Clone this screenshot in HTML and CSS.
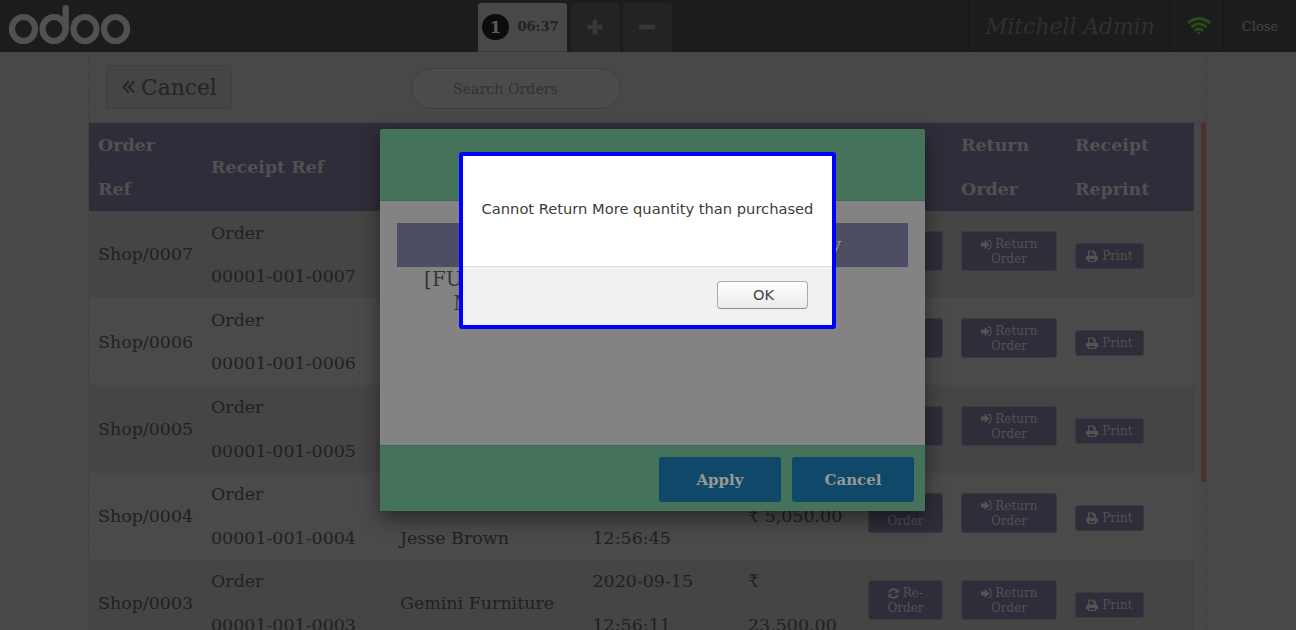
FILE: index.html
```html
<!DOCTYPE html>
<html lang="en">
<head>
<meta charset="utf-8">
<title>Point of Sale</title>
<link rel="stylesheet" href="styles.css">
</head>
<body>
<svg class="defs" width="0" height="0">
  <symbol id="i-return" viewBox="0 0 12 12"><path d="M0 3.900h4V.8L9.200 6 4 11.200V8.100H0z" fill="currentColor"/><path d="M7.500 1.500h1.600q1.700 0 1.700 1.700v5.600q0 1.700-1.700 1.700H7.500" fill="none" stroke="currentColor" stroke-width="1.200"/></symbol>
  <symbol id="i-print" viewBox="0 0 12 12"><path d="M2.600 6V1.200h5.100l1.700 1.700V6M7.300 1.200v2.200h2.100" fill="none" stroke="currentColor" stroke-width="1.200"/><path d="M1.700 5.500h8.600q1.700 0 1.700 1.700v3H9.800V8.300H2.200v1.900H0v-3q0-1.700 1.700-1.700z" fill="currentColor"/><path d="M2.500 8.500h7v2.800h-7z" fill="none" stroke="currentColor" stroke-width="1.200"/></symbol>
  <symbol id="i-refresh" viewBox="0 0 12 12"><path d="M1.400 5A4.600 4.600 0 0 1 9.500 3M10.600 7A4.600 4.600 0 0 1 2.500 9" fill="none" stroke="currentColor" stroke-width="2.100"/><path d="M11.700.5v4.700H7zM.3 11.500V6.800H5z" fill="currentColor"/></symbol>
</svg>
<div class="pos">
  <header class="topbar">
    <svg class="logo" width="124" height="42" viewBox="0 0 124 42" fill="none" stroke="#515151" stroke-width="6.200">
      <ellipse cx="15.500" cy="26" rx="11.500" ry="12"/><ellipse cx="46" cy="26" rx="11.500" ry="12"/><ellipse cx="77" cy="26" rx="11.500" ry="12"/><ellipse cx="107.500" cy="26" rx="11.500" ry="12"/>
      <path d="M57.700 26V5" stroke-linecap="round"/>
    </svg>
    <div class="tabs">
      <div class="tab active"><span class="num">1</span><span class="time">06:37</span></div>
      <div class="tab sq"><svg width="16" height="16" viewBox="0 0 16 16"><path d="M8 .5v15M.5 8h15" stroke="#383838" stroke-width="4.600"/></svg></div>
      <div class="tab sq"><svg width="16" height="16" viewBox="0 0 16 16"><path d="M0 8h16" stroke="#383838" stroke-width="4.600"/></svg></div>
    </div>
    <div class="user">Mitchell Admin</div>
    <div class="wifi"><svg width="26" height="18" viewBox="0 0 26 18" fill="none" stroke="#264c17" stroke-width="3"><path d="M2 6.200q11-9.200 22 0M5.400 10q7.600-6.400 15.200 0M8.700 13.600q4.300-3.500 8.600 0"/><path d="M10.900 15.500q2.100-1.500 4.200 0L13 17.700z" fill="#264c17" stroke="none"/></svg></div>
    <div class="close">Close</div>
  </header>
  <main class="screen">
    <div class="tools">
      <div class="back"><svg width="13" height="14" viewBox="0 0 13 14" fill="none" stroke="#242424" stroke-width="1.900"><path d="M6.700 1.500L1.500 7l5.200 5.500M12 1.500L6.800 7l5.200 5.500"/></svg><span>Cancel</span></div>
      <div class="search">Search Orders</div>
    </div>
    <div class="list">
      <div class="orders">
        <div class="row head"><div>Order<br>Ref</div><div>Receipt Ref</div><div></div><div></div><div></div><div>Re-<br>Order</div><div>Return<br>Order</div><div>Receipt<br>Reprint</div></div>
        <div class="row odd"><div>Shop/0007</div><div>Order<br>00001-001-0007</div><div></div><div></div><div></div><div><span class="btn re"><svg><use href="#i-refresh"/></svg> Re-<br>Order</span></div><div><span class="btn ret"><svg><use href="#i-return"/></svg> Return<br>Order</span></div><div><span class="btn print"><svg><use href="#i-print"/></svg> Print</span></div></div>
        <div class="row"><div>Shop/0006</div><div>Order<br>00001-001-0006</div><div></div><div></div><div></div><div><span class="btn re"><svg><use href="#i-refresh"/></svg> Re-<br>Order</span></div><div><span class="btn ret"><svg><use href="#i-return"/></svg> Return<br>Order</span></div><div><span class="btn print"><svg><use href="#i-print"/></svg> Print</span></div></div>
        <div class="row odd"><div>Shop/0005</div><div>Order<br>00001-001-0005</div><div></div><div></div><div></div><div><span class="btn re"><svg><use href="#i-refresh"/></svg> Re-<br>Order</span></div><div><span class="btn ret"><svg><use href="#i-return"/></svg> Return<br>Order</span></div><div><span class="btn print"><svg><use href="#i-print"/></svg> Print</span></div></div>
        <div class="row"><div>Shop/0004</div><div>Order<br>00001-001-0004</div><div><br>Jesse Brown</div><div>2020-09-15<br>12:56:45</div><div>₹ 5,050.00</div><div><span class="btn re"><svg><use href="#i-refresh"/></svg> Re-<br>Order</span></div><div><span class="btn ret"><svg><use href="#i-return"/></svg> Return<br>Order</span></div><div><span class="btn print"><svg><use href="#i-print"/></svg> Print</span></div></div>
        <div class="row odd"><div>Shop/0003</div><div>Order<br>00001-001-0003</div><div>Gemini Furniture</div><div>2020-09-15<br>12:56:11</div><div>₹<br>23,500.00</div><div><span class="btn re"><svg><use href="#i-refresh"/></svg> Re-<br>Order</span></div><div><span class="btn ret"><svg><use href="#i-return"/></svg> Return<br>Order</span></div><div><span class="btn print"><svg><use href="#i-print"/></svg> Print</span></div></div>
      </div>
      <div class="thumb"></div>
    </div>
  </main>
</div>
<section class="popup">
  <div class="popup-head"></div>
  <div class="popup-body">
    <div class="cols"><span></span><span></span><span>Quantity</span></div>
    <div class="product"><div>[FURN_0789]<br>Monitor</div></div>
  </div>
  <div class="popup-foot"><div class="action">Apply</div><div class="action">Cancel</div></div>
</section>
<section class="alert">
  <div class="message">Cannot Return More quantity than purchased</div>
  <div class="alert-foot"><button class="ok">OK</button></div>
</section>
</body>
</html>
```
FILE: styles.css
```css
* { box-sizing: border-box; }
body { margin: 0; overflow: hidden; background: #484848; font-family: "DejaVu Serif", serif; color: #212121; }
.defs { position: absolute; }
.pos { height: 630px; overflow: hidden; }
.topbar { height: 52px; display: flex; background: #1c1c1c; }
.logo { margin: 3px 0 0 8px; flex: none; }
.tabs { display: flex; margin-left: 346px; padding-top: 3px; width: 490px; }
.tab { height: 49px; border-radius: 3px 3px 0 0; display: flex; align-items: center; }
.tab.active { width: 89px; background: #484848; border-bottom: 1px solid #3b3b3b; padding-left: 4px; margin-right: 4px; }
.num { width: 27px; height: 26px; border-radius: 13px; background: #0c0c0c; color: #5a5a5a; font-weight: bold; font-size: 17px; line-height: 26px; text-align: center; }
.time { font-weight: bold; font-size: 13px; margin: 0 0 2px 8.5px; color: #212121; }
.sq { width: 49px; justify-content: center; background: #232323; margin-right: 3px; padding: 0 1px 1px 0; }
.user, .wifi, .close { border-left: 1px solid #171717; display: flex; align-items: center; justify-content: center; }
.user { width: 201px; font-size: 21.8px; font-style: italic; color: #303030; white-space: nowrap; padding-left: 2px; }
.wifi { width: 54px; padding-left: 4px; padding-bottom: 1px; }
.close { width: 73px; font-size: 13px; color: #484848; }
.screen { margin-left: 88px; width: 1119px; border-left: 1px dashed #404040; border-right: 1px dashed #404040; }
.tools { height: 71px; border-bottom: 1px dashed #3f3f3f; display: flex; padding: 13px 0 0 17px; }
.back { width: 126px; height: 44px; border: 1px solid #3e3e3e; border-radius: 3px; background: #454545; display: flex; align-items: center; padding-left: 15px; gap: 6px; font-size: 21.8px; color: #242424; }
.search { width: 210px; height: 41px; margin: 3px 0 0 179px; border: 1px solid #3d3d3d; border-radius: 21px; background: #4b4b4b; color: #323232; font-size: 14.2px; line-height: 40px; padding-left: 41px; }
.list { display: flex; }
.orders { width: 1105px; font-size: 17.46px; line-height: 43.65px; }
.row { display: grid; grid-template-columns: 113px 189px 192.5px 156px 119.5px 93px 114px 128px; height: 87.2px; padding-top: .6px; align-items: center; background: #4a4a4a; }
.row > div { padding-left: 9px; white-space: nowrap; }
.row > div:nth-child(5) { padding-left: 8.5px; }
.row.odd { background: #454545; }
.row.head { height: 88px; padding-top: 1px; background: #2e2d39; color: #515151; font-weight: bold; }
.btn { display: block; border: 1px solid #3a3940; border-radius: 3px; background: #2e2d39; color: #535353; font-size: 12px; line-height: 15px; text-align: center; padding: 5px 0; height: 40px; }
.btn svg { width: 11px; height: 11px; vertical-align: -1.5px; }
.re { width: 75px; margin-top: -8px; }
.ret { width: 96px; margin-top: -8px; }
.print { width: 69px; height: 26px; margin-top: 2px; }
.print svg { width: 12px; height: 12px; vertical-align: -2px; }
.thumb { width: 5px; height: 359px; margin-left: 7px; background: #4f3027; border-radius: 0 0 2px 2px; }
.popup { position: absolute; left: 380px; top: 129px; width: 545px; height: 382px; display: flex; flex-direction: column; border-radius: 3px 3px 0 0; background: #838383; box-shadow: 0 8px 20px rgba(0,0,0,.45); overflow: visible; }
.popup-head { height: 72px; background: #44725a; border-bottom: 1px solid #3d6851; border-radius: 3px 3px 0 0; }
.popup-body { flex: 1; padding: 22px 17px 0; }
.cols { display: grid; grid-template-columns: 155px 165px 191px; height: 44px; background: #4d4e64; color: #969696; font-size: 20px; line-height: 44px; }
.cols span:last-child { padding-left: 36.5px; }
.product { width: 194px; text-align: center; font-size: 20px; line-height: 24px; color: #363636; }
.popup-foot { height: 66px; background: #44725a; border-top: 1px solid #3d6851; display: flex; justify-content: flex-end; gap: 11px; padding: 11px 11px 0 0; }
.action { width: 122px; height: 45px; border-radius: 3px; background: #0f4868; color: #979797; font-size: 15px; font-weight: bold; line-height: 46px; text-align: center; }
.alert { position: absolute; left: 459px; top: 152px; width: 377px; height: 177px; border: 4px solid #00f; border-radius: 3px; background: #fff; font-family: "DejaVu Sans", sans-serif; font-size: 14.67px; color: #3c3c3c; }
.message { height: 110px; line-height: 106px; text-align: center; white-space: nowrap; }
.alert-foot { height: 59px; background: #f1f1f1; border-top: 1px solid #dfdfdf; padding: 14px 24px 0 0; display: flex; justify-content: flex-end; }
.ok { width: 91px; height: 28px; border: 1px solid #aaa; border-bottom-color: #8d8d8d; border-radius: 4px; background: linear-gradient(#fff, #ebeae8); font: 14.67px "DejaVu Sans", sans-serif; color: #444; padding: 0 0 2px 2px; }
```
